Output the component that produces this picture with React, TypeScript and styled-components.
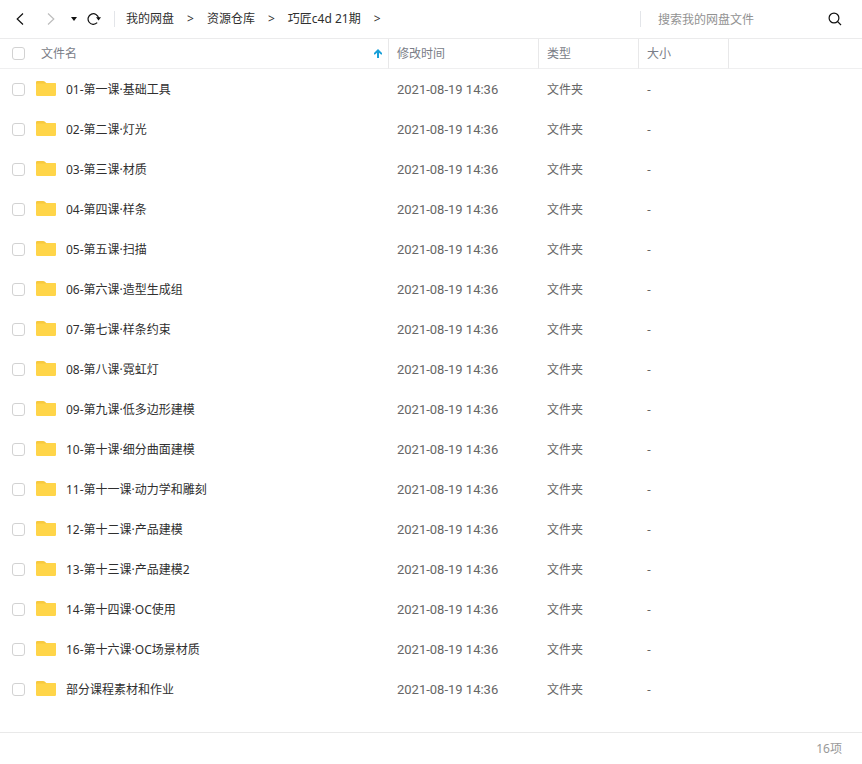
import React, { useState } from "react";
import styled, { createGlobalStyle } from "styled-components";

const GlobalStyle = createGlobalStyle`
  *, *::before, *::after { box-sizing: border-box; }
  body {
    margin: 0;
    background: #fff;
    color: #2f2f2f;
    font: 12px/20px "Noto Sans", "Noto Sans CJK SC", sans-serif;
  }
  button, input { font: inherit; color: inherit; }
`;

const Page = styled.div`
  display: flex;
  flex-direction: column;
  min-height: 100vh;
`;

const Toolbar = styled.header`
  display: flex;
  align-items: center;
  height: 39px;
  border-bottom: 1px solid #ebebec;
`;

const History = styled.div`
  display: flex;
  align-items: center;
  padding: 0 7px 0 12px;
`;

const IconButton = styled.button<{ $width?: number; $muted?: boolean }>`
  display: flex;
  flex: none;
  align-items: center;
  justify-content: center;
  width: ${(p) => p.$width ?? 16}px;
  height: 16px;
  padding: 0;
  border: 0;
  background: none;
  color: ${(p) => (p.$muted ? "#bdbdbd" : "#111")};
  cursor: pointer;
  svg { display: block; flex: none; }
`;

const ForwardButton = styled(IconButton)`
  margin-left: 7px;
`;

const Divider = styled.span`
  width: 1px;
  height: 16px;
  background: #e3e5e9;
`;

const Crumbs = styled.nav`
  display: flex;
  flex: 1;
  align-items: center;
  gap: 13px;
  padding-left: 11px;
  white-space: nowrap;
`;

const Crumb = styled.a`
  color: inherit;
  text-decoration: none;
`;

const Search = styled.form`
  display: flex;
  align-items: center;
  width: 222px;
  padding-right: 19px;
`;

const SearchInput = styled.input`
  flex: 1;
  min-width: 0;
  height: 24px;
  padding: 0 0 0 17px;
  border: 0;
  outline: 0;
  background: none;
  &::placeholder { color: #929292; opacity: 1; }
`;

const Listing = styled.main`
  flex: 1;
`;

const Table = styled.table`
  width: 100%;
  table-layout: fixed;
  border-spacing: 0;
`;

const Col = styled.col<{ $width?: number }>`
  width: ${(p) => (p.$width ? p.$width + "px" : "auto")};
`;

const HeadCell = styled.th`
  height: 30px;
  padding: 0 8px;
  border-right: 1px solid #e8e8e9;
  border-bottom: 1px solid #efeff0;
  color: #7a7d87;
  font-weight: 400;
  text-align: left;
  &:first-child { padding: 0 6px 0 12px; }
  &:last-child { border-right: 0; }
`;

const Cell = styled.td`
  height: 40px;
  padding: 2px 8px 0;
  color: #666;
  white-space: nowrap;
`;

const NameCell = styled(Cell)`
  padding: 0 8px 0 12px;
`;

const DateCell = styled(Cell)`
  font-family: Roboto, sans-serif;
  font-size: 13px;
`;

const NameLine = styled.div<{ $gap: number }>`
  display: flex;
  align-items: center;
  gap: ${(p) => p.$gap}px;
`;

const CheckBox = styled.input`
  appearance: none;
  flex: none;
  width: 13px;
  height: 13px;
  margin: 0;
  border: 1px solid #d2d2d2;
  border-radius: 3px;
  background: #fff;
  &:checked { border-color: #06a7ff; background: #06a7ff; }
`;

const FileLabel = styled.label`
  display: flex;
  align-items: center;
  gap: 10px;
  color: #2f2f2f;
  svg { flex: none; }
`;

const FileName = styled.span`
  padding-top: 2px;
`;

const SortButton = styled.button`
  display: flex;
  flex: 1;
  align-items: center;
  justify-content: space-between;
  padding: 0;
  border: 0;
  background: none;
  cursor: pointer;
`;

const StatusBar = styled.footer`
  height: 32px;
  padding: 6px 20px;
  border-top: 1px solid #e9e9e9;
  color: #999;
  text-align: right;
`;

const Folder = () => (
  <svg width="20" height="18" viewBox="0 0 20 18" aria-hidden="true">
    <path d="M0 2.200Q0 1 1.200 1H7.200Q8 1 8.700 1.600L10.300 3H18.600Q20 3 20 4.400V9H0Z" fill="#f7c93f" />
    <path d="M0 4.600Q0 3.600 1 3.600H8.200Q9.200 3.600 9.900 3.300Q10.500 3 11.400 3H18.600Q20 3 20 4.400V14.800Q20 16 18.800 16H1.200Q0 16 0 14.800Z" fill="#ffd549" />
  </svg>
);

const Chevron = ({ forward = false }: { forward?: boolean }) => (
  <svg width="8" height="14" viewBox="0 0 8 14" fill="none" stroke="currentColor" strokeWidth="1.2">
    <path d={forward ? "M1 1.500L6.800 7L1 12.500" : "M7 1.500L1.200 7L7 12.500"} />
  </svg>
);

const crumbs = ["我的网盘", "资源仓库", "巧匠c4d 21期"];

const folders = [
  "01-第一课·基础工具",
  "02-第二课·灯光",
  "03-第三课·材质",
  "04-第四课·样条",
  "05-第五课·扫描",
  "06-第六课·造型生成组",
  "07-第七课·样条约束",
  "08-第八课·霓虹灯",
  "09-第九课·低多边形建模",
  "10-第十课·细分曲面建模",
  "11-第十一课·动力学和雕刻",
  "12-第十二课·产品建模",
  "13-第十三课·产品建模2",
  "14-第十四课·OC使用",
  "16-第十六课·OC场景材质",
  "部分课程素材和作业",
];

export default function App() {
  const [picked, setPicked] = useState<number[]>([]);
  const toggle = (i: number) =>
    setPicked((p) => (p.includes(i) ? p.filter((n) => n !== i) : [...p, i]));
  const all = picked.length === folders.length;

  return (
    <Page>
      <GlobalStyle />
      <Toolbar>
        <History>
          <IconButton aria-label="后退"><Chevron /></IconButton>
          <ForwardButton aria-label="前进" $width={32} $muted><Chevron forward /></ForwardButton>
          <IconButton aria-label="历史记录" $width={14}>
            <svg width="6" height="4" viewBox="0 0 6 4">
              <path d="M0 0H6L3 4Z" fill="currentColor" />
            </svg>
          </IconButton>
          <IconButton aria-label="刷新" $width={26}>
            <svg width="14" height="14" viewBox="0 0 14 14" fill="none" stroke="currentColor" strokeWidth="1.2">
              <path d="M10.200 10.700A5.300 5.300 0 1 1 11.600 6.200" />
              <path d="M9 5.200H14L11.600 8.400Z" fill="currentColor" stroke="none" />
            </svg>
          </IconButton>
        </History>
        <Divider />
        <Crumbs aria-label="路径">
          {crumbs.map((name) => (
            <React.Fragment key={name}>
              <Crumb href="#">{name}</Crumb>
              <span>&gt;</span>
            </React.Fragment>
          ))}
        </Crumbs>
        <Search onSubmit={(e) => e.preventDefault()}>
          <Divider />
          <SearchInput aria-label="搜索" placeholder="搜索我的网盘文件" />
          <IconButton aria-label="开始搜索">
            <svg width="14" height="14" viewBox="0 0 14 14" fill="none" stroke="currentColor" strokeWidth="1.2">
              <circle cx="6" cy="6" r="4.900" />
              <path d="M9.400 9.400L13 13" />
            </svg>
          </IconButton>
        </Search>
      </Toolbar>
      <Listing>
        <Table>
          <colgroup>
            <Col $width={389} />
            <Col $width={150} />
            <Col $width={100} />
            <Col $width={90} />
            <Col />
          </colgroup>
          <thead>
            <tr>
              <HeadCell scope="col">
                <NameLine $gap={16}>
                  <CheckBox
                    type="checkbox"
                    aria-label="全选"
                    checked={all}
                    onChange={() => setPicked(all ? [] : folders.map((_, i) => i))}
                  />
                  <SortButton>
                    文件名
                    <svg width="8" height="10" viewBox="0 0 8 10" fill="#189fd8" aria-hidden="true">
                      <path d="M4 0L8 4V5.400H7L5 3.800V9H3V3.800L1 5.400H0V4Z" />
                    </svg>
                  </SortButton>
                </NameLine>
              </HeadCell>
              <HeadCell scope="col">修改时间</HeadCell>
              <HeadCell scope="col">类型</HeadCell>
              <HeadCell scope="col">大小</HeadCell>
              <HeadCell as="td" />
            </tr>
          </thead>
          <tbody>
            {folders.map((name, i) => (
              <tr key={name}>
                <NameCell>
                  <NameLine $gap={11}>
                    <CheckBox
                      type="checkbox"
                      id={`folder-${i}`}
                      checked={picked.includes(i)}
                      onChange={() => toggle(i)}
                    />
                    <FileLabel htmlFor={`folder-${i}`}>
                      <Folder />
                      <FileName>{name}</FileName>
                    </FileLabel>
                  </NameLine>
                </NameCell>
                <DateCell>2021-08-19 14:36</DateCell>
                <Cell>文件夹</Cell>
                <Cell>-</Cell>
                <Cell />
              </tr>
            ))}
          </tbody>
        </Table>
      </Listing>
      <StatusBar>{folders.length}项</StatusBar>
    </Page>
  );
}
